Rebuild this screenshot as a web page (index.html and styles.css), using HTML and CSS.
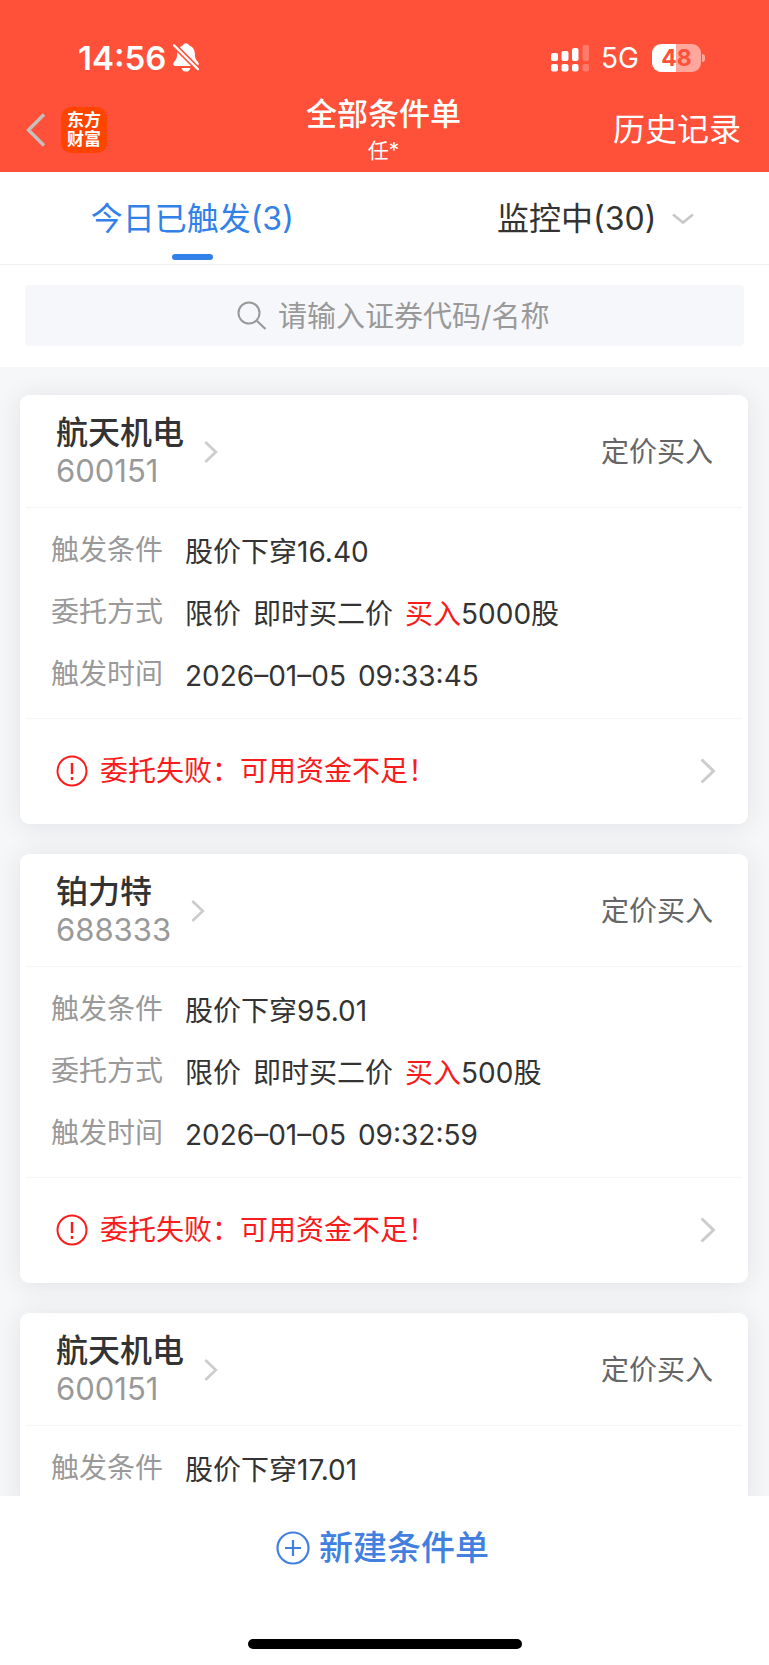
FILE: index.html
```html
<!DOCTYPE html>
<html lang="zh-CN">
<head>
<meta charset="utf-8">
<meta name="viewport" content="width=device-width, initial-scale=1">
<title>全部条件单</title>
<link rel="stylesheet" href="styles.css">
</head>
<body>
<svg class="defs" aria-hidden="true">
  <symbol id="chevron" viewBox="0 0 16 26"><path d="M1.5 1.5 L13.5 13 L1.5 24.5" fill="none" stroke="currentColor" stroke-width="3"/></symbol>
  <symbol id="alert" viewBox="0 0 32 32"><circle cx="16" cy="16" r="14.5" fill="none" stroke="currentColor" stroke-width="2"/><path d="M16 8v11M16 22v3" stroke="currentColor" stroke-width="2.4" fill="none"/></symbol>
</svg>
<div class="app">
  <header class="top">
    <div class="status">
      <div class="status-side">
        <span class="clock">14:56</span>
        <svg class="bell" viewBox="0 0 26 29" aria-hidden="true">
          <path d="M13 .3C11.400.3 10.300 1.200 9.900 2.600C6.200 3.600 4.200 7 4.100 11C4 16 2.700 16.800 1.200 18.700C.5 19.600.2 20.300.2 21C.2 22.200 1 22.900 2.300 22.900H23.700C25 22.900 25.800 22.200 25.800 21C25.800 20.300 25.500 19.600 24.800 18.700C23.300 16.800 22 16 21.900 11C21.800 7 19.800 3.600 16.100 2.600C15.700 1.200 14.600.3 13 .3Z" fill="#fff"/>
          <path d="M8.600 24.900h8.800c-.5 2.300-2.200 3.700-4.400 3.700s-3.900-1.400-4.400-3.700Z" fill="#fff"/>
          <path d="M-1 .2L27 28.200" stroke="#ff503a" stroke-width="5.400"/>
          <path d="M1 2.200L25 26.200" stroke="#fff" stroke-width="2.300" stroke-linecap="round"/>
        </svg>
      </div>
      <div class="status-side">
        <svg class="signal" viewBox="0 0 38 28" fill="#fff" aria-hidden="true">
          <rect x="0" y="9" width="7" height="8" rx="2"/><rect x="10.500" y="7" width="7" height="10" rx="2"/><rect x="21" y="4" width="6.500" height="13" rx="2"/><rect x="31.500" y="1" width="6.500" height="16" rx="2" opacity=".25"/>
          <rect x="0" y="20" width="7" height="7.500" rx="2"/><rect x="10.500" y="20" width="7" height="7.500" rx="2"/><rect x="21" y="20" width="6.500" height="7.500" rx="2"/><rect x="31.500" y="20" width="6.500" height="7.500" rx="2" opacity=".25"/>
        </svg>
        <span class="network">5G</span>
        <span class="battery"><span class="battery-body">48</span><span class="battery-tip"></span></span>
      </div>
    </div>
    <nav class="nav">
      <div class="nav-start">
        <button class="back" type="button" aria-label="返回"><svg viewBox="0 0 20 34" aria-hidden="true"><path d="M18 1.500 L2.500 17 L18 32.500" fill="none" stroke="#c4c0be" stroke-width="3.400"/></svg></button>
        <span class="logo">东方<br>财富</span>
      </div>
      <div class="nav-title"><h1>全部条件单</h1><p>任*</p></div>
      <a class="history" href="#history">历史记录</a>
    </nav>
  </header>

  <div class="tabs" role="tablist">
    <button class="tab active" type="button" role="tab" aria-selected="true"><span class="tab-text">今日已触发(3)</span></button>
    <button class="tab" type="button" role="tab" aria-selected="false"><span class="tab-text">监控中(30)</span><svg class="down" viewBox="0 0 22 12" aria-hidden="true"><path d="M1 1.500 L11 9.500 L21 1.500" fill="none" stroke="#c8c8c8" stroke-width="2.600"/></svg></button>
  </div>

  <div class="search">
    <label class="search-box">
      <svg viewBox="0 0 30 30" aria-hidden="true"><circle cx="12" cy="12" r="10.500" fill="none" stroke="#999" stroke-width="2"/><path d="M19.500 19.500L28.500 28" stroke="#999" stroke-width="2.200"/></svg>
      <input type="text" placeholder="请输入证券代码/名称" aria-label="请输入证券代码/名称">
    </label>
  </div>

  <main class="list">
    <article class="card">
      <div class="card-head">
        <a class="stock" href="#600151"><span class="stock-text"><strong>航天机电</strong><span>600151</span></span><svg class="chev-small"><use href="#chevron"/></svg></a>
        <span class="kind">定价买入</span>
      </div>
      <dl class="rows">
        <div class="row"><dt>触发条件</dt><dd>股价下穿16.40</dd></div>
        <div class="row"><dt>委托方式</dt><dd class="parts"><span>限价</span> <span>即时买二价</span> <span><em>买入</em>5000股</span></dd></div>
        <div class="row"><dt>触发时间</dt><dd class="parts"><span>2026–01–05</span> <span>09:33:45</span></dd></div>
      </dl>
      <a class="result" href="#result-1"><svg class="alert"><use href="#alert"/></svg><span>委托失败：可用资金不足！</span><svg class="chev"><use href="#chevron"/></svg></a>
    </article>

    <article class="card">
      <div class="card-head">
        <a class="stock" href="#688333"><span class="stock-text"><strong>铂力特</strong><span>688333</span></span><svg class="chev-small"><use href="#chevron"/></svg></a>
        <span class="kind">定价买入</span>
      </div>
      <dl class="rows">
        <div class="row"><dt>触发条件</dt><dd>股价下穿95.01</dd></div>
        <div class="row"><dt>委托方式</dt><dd class="parts"><span>限价</span> <span>即时买二价</span> <span><em>买入</em>500股</span></dd></div>
        <div class="row"><dt>触发时间</dt><dd class="parts"><span>2026–01–05</span> <span>09:32:59</span></dd></div>
      </dl>
      <a class="result" href="#result-2"><svg class="alert"><use href="#alert"/></svg><span>委托失败：可用资金不足！</span><svg class="chev"><use href="#chevron"/></svg></a>
    </article>

    <article class="card card-last">
      <div class="card-head">
        <a class="stock" href="#600151"><span class="stock-text"><strong>航天机电</strong><span>600151</span></span><svg class="chev-small"><use href="#chevron"/></svg></a>
        <span class="kind">定价买入</span>
      </div>
      <dl class="rows">
        <div class="row"><dt>触发条件</dt><dd>股价下穿17.01</dd></div>
      </dl>
    </article>
  </main>

  <footer class="bottom">
    <button class="create" type="button"><svg viewBox="0 0 34 34" aria-hidden="true"><circle cx="17" cy="17" r="15.500" fill="none" stroke="currentColor" stroke-width="2.200"/><path d="M17 9v16M9 17h16" stroke="currentColor" stroke-width="2.200"/></svg>新建条件单</button>
    <div class="home-bar"></div>
  </footer>
</div>
</body>
</html>
```

FILE: styles.css
```css
* { box-sizing: border-box; margin: 0; padding: 0; }

body {
  font-family: Inter, "Noto Sans CJK SC", sans-serif;
  color: #333;
  background: #fff;
}

button, input { font: inherit; color: inherit; border: 0; background: none; }
a { color: inherit; text-decoration: none; }
svg { display: block; flex: none; }
.defs { display: none; }

.app { display: flex; flex-direction: column; height: 100vh; }

/* Header */
.top { background: #ff503a; color: #fff; }
.status {
  display: flex;
  justify-content: space-between;
  height: 86px;
  padding: 29px 64px 0 78px;
}
.status-side { display: flex; align-items: center; }
.clock { font-size: 33px; font-weight: 600; line-height: 40px; }
.bell { width: 26px; height: 29px; margin-left: 7px; }
.signal { width: 38px; height: 28px; }
.network { margin-left: 12px; font-size: 28px; line-height: 36px; }
.battery { display: flex; align-items: center; gap: 1px; margin-left: 13px; }
.battery-body {
  width: 49px;
  border-radius: 9px;
  background: linear-gradient(90deg, #fff 48%, #ffa79c 48%);
  color: #ff503a;
  font-size: 23px;
  font-weight: 700;
  line-height: 28px;
  text-align: center;
}
.battery-tip { width: 3px; height: 8px; border-radius: 0 3px 3px 0; background: #ffa79c; }

.nav {
  display: grid;
  grid-template-columns: 1fr auto 1fr;
  align-items: center;
  height: 86px;
  padding: 2px 28px 0 26px;
}
.nav-start { display: flex; align-items: center; gap: 15px; }
.back svg { width: 20px; height: 34px; }
.logo {
  width: 46px;
  padding: 4px 0;
  border-radius: 10px;
  background: #ff4400;
  font-size: 17px;
  font-weight: 700;
  line-height: 19px;
  text-align: center;
}
.nav-title { text-align: center; }
.nav-title h1 { font-size: 31px; font-weight: 500; line-height: 42px; }
.nav-title p { font-size: 21px; line-height: 32px; }
.history { justify-self: end; font-size: 32px; line-height: 40px; }

/* Tabs */
.tabs { display: grid; grid-template-columns: 1fr 1fr; border-bottom: 1px solid #f0f1f3; }
.tab {
  display: grid;
  grid-template-columns: 1fr auto 1fr;
  align-items: center;
  gap: 16px;
  height: 92px;
  padding-top: 2px;
  font-size: 32px;
  line-height: 40px;
  position: relative;
}
.tab-text { grid-column: 2; }
.tab.active { color: #3281e8; }
.tab.active::after {
  content: "";
  position: absolute;
  left: 50%;
  bottom: 4px;
  width: 41px;
  height: 6px;
  margin-left: -20px;
  border-radius: 3px;
  background: #3281e8;
}
.down { width: 22px; height: 12px; }

/* Search */
.search { padding: 20px 25px 21px; }
.search-box {
  display: flex;
  align-items: center;
  justify-content: center;
  gap: 11px;
  height: 61px;
  padding-left: 18px;
  border-radius: 4px;
  background: #f6f7fa;
}
.search-box svg { width: 30px; height: 30px; }
.search-box input { width: 272px; height: 40px; field-sizing: content; font-size: 29px; line-height: 36px; padding-bottom: 4px; outline: 0; }
.search-box input::placeholder { color: #999; opacity: 1; }

/* Order cards */
.list {
  flex: 1;
  min-height: 0;
  display: flex;
  flex-direction: column;
  gap: 30px;
  padding: 28px 21px 0 20px;
  overflow: hidden;
  background: #f6f7f9;
}
.card {
  flex: none;
  padding: 0 6px;
  border-radius: 9px;
  background: #fff;
  box-shadow: 0 2px 26px rgba(40, 44, 52, 0.1);
}
.card-last { flex: 1; border-radius: 9px 9px 0 0; }
.card-head {
  display: flex;
  align-items: center;
  justify-content: space-between;
  height: 113px;
  padding: 2px 29px 0 30px;
  border-bottom: 1px solid #f5f5f6;
}
.stock { display: flex; align-items: center; gap: 20px; }
.stock-text { display: flex; flex-direction: column; }
.stock-text strong { font-size: 32px; font-weight: 500; line-height: 38px; }
.stock-text span { font-size: 31px; line-height: 38px; color: #999; }
.chev-small { width: 14px; height: 24px; color: #ccc; }
.kind { font-size: 28px; line-height: 40px; color: #666; }

.rows {
  display: flex;
  flex-direction: column;
  gap: 18px;
  padding: 22px 25px 20px;
  border-bottom: 1px solid #f5f5f6;
}
.card-last .rows { border-bottom: 0; }
.row { display: flex; align-items: flex-start; gap: 22px; font-size: 28px; }
.row dt { line-height: 40px; color: #999; }
.row dd { line-height: 44px; }
.parts { display: flex; gap: 12px; }
.row em { font-style: normal; color: #f81c1c; }

.result {
  display: flex;
  align-items: center;
  gap: 12px;
  height: 105px;
  padding: 0 26px 2px 30px;
  color: #f81c1c;
  font-size: 28px;
  line-height: 40px;
}
.alert { width: 32px; height: 32px; }
.chev { width: 16px; height: 26px; margin-left: auto; color: #ccc; }

/* Bottom bar */
.bottom {
  display: flex;
  flex-direction: column;
  align-items: center;
  justify-content: space-between;
  height: 169px;
  padding: 28px 0 16px;
  background: #fff;
}
.create {
  display: flex;
  align-items: center;
  gap: 9px;
  padding-right: 4px;
  color: #4280e0;
  font-size: 34px;
  font-weight: 500;
  line-height: 48px;
}
.create svg { width: 34px; height: 34px; }
.home-bar { width: 274px; height: 10px; border-radius: 5px; background: #000; }
```
